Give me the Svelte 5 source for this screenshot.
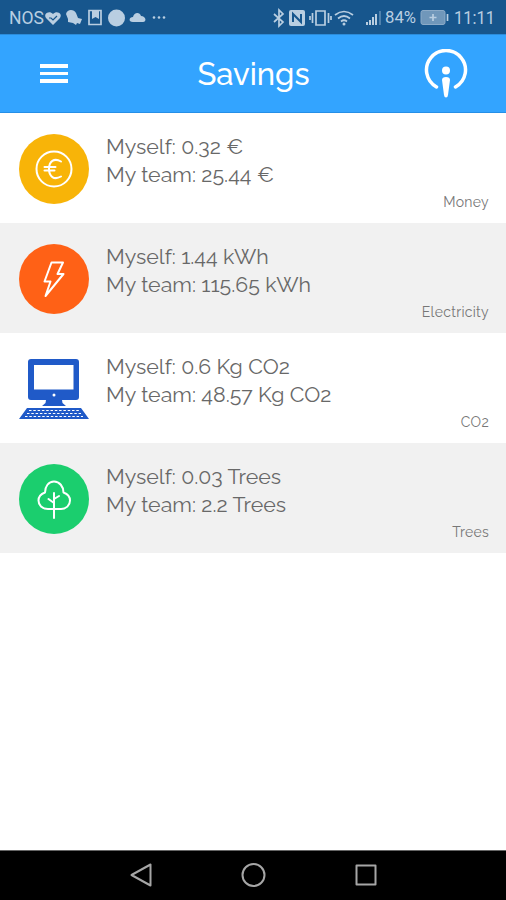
<script>
	const rows = [
		{ icon: "euro", color: "#f8b408", label: "Money", myself: "0.32 €", team: "25.44 €" },
		{ icon: "bolt", color: "#ff6116", label: "Electricity", myself: "1.44 kWh", team: "115.65 kWh" },
		{ icon: "computer", color: "#205ac8", label: "CO2", myself: "0.6 Kg CO2", team: "48.57 Kg CO2" },
		{ icon: "tree", color: "#1bce6e", label: "Trees", myself: "0.03 Trees", team: "2.2 Trees" },
	];
</script>

<div class="screen">
	<div class="status">
		<svg width="506" height="34" viewBox="0 0 506 34">
			<text x="9" y="24" textLength="35" lengthAdjust="spacingAndGlyphs">NOS</text>
			<path d="M53 25l-7-7c-3-4 3-8 7-4 4-4 10 0 7 4z" />
			<path class="cut" d="M49 18h2l2 2 4-4" />
			<path d="M66 14c1-5 8-5 10-1l2 5 4 1-2 5-3-1-1 2-3-2-5-1v-3z" />
			<path class="line" d="M89 10.500h12v14H89z" />
			<path d="M92 10h7v9l-3.500-2-3.500 2z" />
			<circle cx="116.500" cy="18" r="8.500" />
			<path d="M133 22c-5 0-4-5 0-5 1-5 7-5 8-1 5 0 6 6 2 6z" />
			<circle cx="154" cy="17.500" r="1.300" /><circle cx="159" cy="17.500" r="1.300" /><circle cx="164" cy="17.500" r="1.300" />

			<path class="line" d="M274 14l9 8-4 4V10l4 4-9 8" />
			<rect x="289" y="10" width="16" height="16" rx="2" />
			<path class="cut thick" d="M293 22v-8l8 8v-8" />
			<path class="line" d="M316 11h9v14h-9zM312.500 13v10M328.500 13v10M310 16v4M331 16v4" />
			<path class="line" d="M335 15q9-7 18 0M338 18.500q6-5 12 0M341 21.500q3-2.500 6 0" />
			<circle cx="344" cy="24" r="1.500" />
			<path d="M366 22h2v3h-2zM369 20h2v5h-2zM372 17h2v8h-2zM375 14h2v11h-2z" />
			<path class="dim" d="M379 11h2v14h-2z" />
			<text x="385" y="23" class="percent" textLength="31" lengthAdjust="spacingAndGlyphs">84%</text>
			<rect class="battery" x="421" y="10.500" width="24" height="14" rx="2" />
			<path class="line" d="M447.500 14v7M429.500 17.500h7M433 14v7" />
			<text x="454" y="24" textLength="41" lengthAdjust="spacingAndGlyphs">11:11</text>
		</svg>
	</div>

	<header class="toolbar">
		<div class="menu"><span></span><span></span><span></span></div>
		<div class="title">Savings</div>
		<svg class="logo" width="44" height="50" viewBox="0 0 44 50">
			<path d="M12.500 38A19.500 19.500 0 1 1 31.500 38" />
			<circle cx="22" cy="21.500" r="4" />
			<path class="solid" d="M18 31q0-3 4-3t4 3l-2 15q-.3 2.500-2 2.500t-2-2.500z" />
		</svg>
	</header>

	<main class="list">
		{#each rows as row}
			<section class="row">
				<svg class="icon" width="70" height="70" viewBox="0 0 70 70">
					{#if row.icon !== "computer"}
						<circle cx="35" cy="35" r="35" fill={row.color} />
					{/if}
					{#if row.icon === "euro"}
						<g class="stroke">
							<circle cx="35" cy="35" r="17.500" />
							<path d="M42 27.500c-7-4-12 0-12 7.500s5 11.500 12 7.500M25.500 33h11M25.500 36.500h10" />
						</g>
					{:else if row.icon === "bolt"}
						<path class="stroke" d="M32.500 18.500H44L38.500 30h6L26.500 52l5-14.500h-6z" />
					{:else if row.icon === "tree"}
						<g class="stroke">
							<path d="M35 45h-6c-6 0-9.500-4-9.500-8.500 0-4 2.500-6.500 6.500-8 0-6 3.500-11 9-11s9.500 5 9.500 11c4 1.500 6.500 4 6.500 8 0 5-4 8.500-9 8.500z" />
							<path d="M35 54V29M35 39l-5.500-4M35 35l5-3" />
						</g>
					{:else}
						<g fill={row.color}>
							<path fill-rule="evenodd" d="M12 5h45q3 0 3 3v35q0 3-3 3H12q-3 0-3-3V8q0-3 3-3zM15 11v24.500h39.500V11z" />
							<path d="M27 46h16l.5 3 3.500 3H23l3.500-3zM8 54h54l8 11H0z" />
						</g>
						<circle cx="35" cy="41" r="1.500" fill="#fff" />
						<path class="keys" d="M10 56.500h50M8 59.500h54M6 62.500h58" />
					{/if}
				</svg>
				<div class="values">
					<div>Myself: {row.myself}</div>
					<div>My team: {row.team}</div>
				</div>
				<div class="label">{row.label}</div>
			</section>
		{/each}
	</main>

	<nav class="navbar">
		<svg width="506" height="49" viewBox="0 0 506 49">
			<path d="M131.500 24L150.500 13.500v21z" />
			<circle cx="253.500" cy="24" r="11" />
			<rect x="356.500" y="14.500" width="19" height="19" />
		</svg>
	</nav>
</div>

<style>
	:global(body) {
		margin: 0;
		background: #fff;
	}

	.screen {
		display: flex;
		flex-direction: column;
		width: 506px;
		height: 900px;
		font-family: Raleway, Lato, "Open Sans", sans-serif;
	}

	svg {
		display: block;
		flex: none;
	}

	.status {
		height: 34px;
		background: #17568d;
	}

	.status svg {
		fill: #b9cee1;
		font-family: Roboto, sans-serif;
		font-size: 18px;
	}

	.status .percent {
		font-size: 17px;
	}

	.status .line {
		fill: none;
		stroke: #b9cee1;
		stroke-width: 1.7;
	}

	.status .cut {
		fill: none;
		stroke: #17568d;
		stroke-width: 1.2;
	}

	.status .thick {
		stroke-width: 2;
	}

	.status .dim {
		fill: #4f81ad;
	}

	.status .battery {
		fill: #7097ba;
		stroke: #8cabc8;
	}

	.toolbar {
		display: flex;
		align-items: center;
		justify-content: space-between;
		box-sizing: border-box;
		height: 79px;
		padding: 0 38px 0 40px;
		background: #33a4ff;
		border-top: 1px solid #2b8cdb;
		border-bottom: 1px solid #258fe7;
	}

	.menu {
		display: flex;
		flex-direction: column;
		gap: 4px;
		width: 28px;
	}

	.menu span {
		height: 3.500px;
		background: #fff;
	}

	.title {
		margin-left: 15px;
		color: #fff;
		font-size: 31px;
		font-weight: 500;
		line-height: 40px;
	}

	.logo {
		fill: #fff;
	}

	.logo path {
		fill: none;
		stroke: #fff;
		stroke-width: 3.5;
		stroke-linecap: round;
	}

	.logo .solid {
		fill: #fff;
		stroke: none;
	}

	.list {
		flex: 1;
	}

	.row {
		display: flex;
		box-sizing: border-box;
		height: 110.100px;
		padding: 21px 17px 0 19px;
	}

	.row:nth-child(even) {
		background: #f1f1f1;
	}

	.values {
		flex: 1;
		margin: -1px 0 0 17px;
		color: #686868;
		font-size: 21.350px;
		line-height: 28px;
		white-space: nowrap;
	}

	.label {
		align-self: flex-end;
		margin-bottom: 11px;
		color: #777;
		font-size: 14px;
		letter-spacing: 0.3px;
		line-height: 20px;
	}

	.stroke {
		fill: none;
		stroke: #fff;
		stroke-width: 2;
		stroke-linejoin: round;
		stroke-linecap: round;
	}

	.keys {
		fill: none;
		stroke: #fff;
		stroke-width: 1.2;
		stroke-dasharray: 2.5 1.8;
	}

	.navbar {
		height: 49px;
		background: #000;
		border-top: 1px solid #666;
	}

	.navbar svg {
		fill: none;
		stroke: #a6a6a6;
		stroke-width: 2;
		stroke-linejoin: round;
	}
</style>
